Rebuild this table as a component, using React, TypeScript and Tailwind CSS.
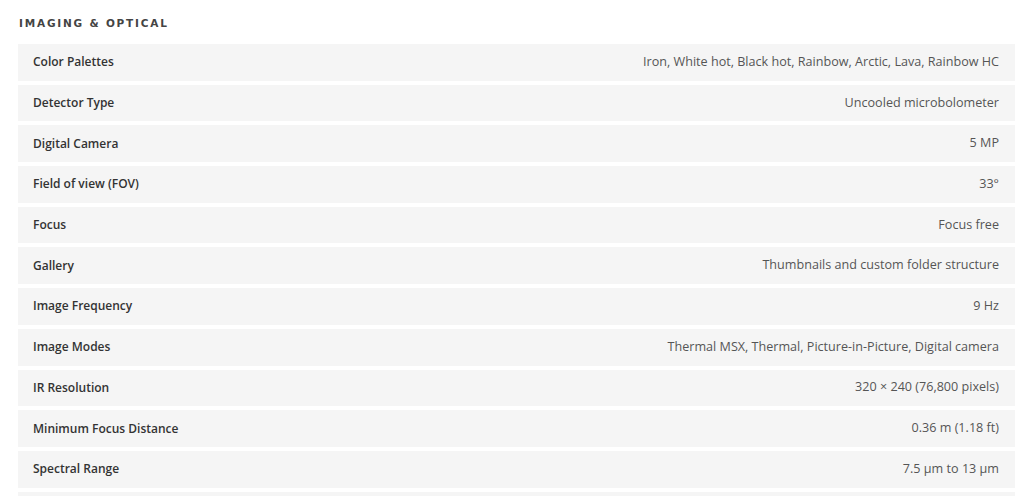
const specs: [string, string][] = [
  ["Color Palettes", "Iron, White hot, Black hot, Rainbow, Arctic, Lava, Rainbow HC"],
  ["Detector Type", "Uncooled microbolometer"],
  ["Digital Camera", "5 MP"],
  ["Field of view (FOV)", "33°"],
  ["Focus", "Focus free"],
  ["Gallery", "Thumbnails and custom folder structure"],
  ["Image Frequency", "9 Hz"],
  ["Image Modes", "Thermal MSX, Thermal, Picture-in-Picture, Digital camera"],
  ["IR Resolution", "320 × 240 (76,800 pixels)"],
  ["Minimum Focus Distance", "0.36 m (1.18 ft)"],
  ["Spectral Range", "7.5 µm to 13 µm"],
  ["Thermal Sensitivity/NETD", "<70 mK"],
];

export default function App() {
  return (
    <div className="h-[496px] overflow-hidden bg-white pl-[18px] pr-[9px] pt-[16px] font-['Open_Sans',sans-serif]">
      {/* Section heading */}
      <h3 className="mb-[14px] pl-px font-['DejaVu_Sans',sans-serif] text-[10.5px] leading-[14px] font-bold uppercase tracking-[1.8px] text-[#444]">
        Imaging &amp; Optical
      </h3>

      {/* Spec rows */}
      <div className="flex flex-col gap-[4px]">
        {specs.map(([label, value]) => (
          <div
            key={label}
            className="flex h-[36.7px] shrink-0 items-center justify-between bg-[#f5f5f5] pl-[15px] pr-[16px]"
          >
            <span className="text-[12px] font-semibold text-[#333]">{label}</span>
            <span className="text-[12.6px] text-[#555]">{value}</span>
          </div>
        ))}
      </div>
    </div>
  );
}
